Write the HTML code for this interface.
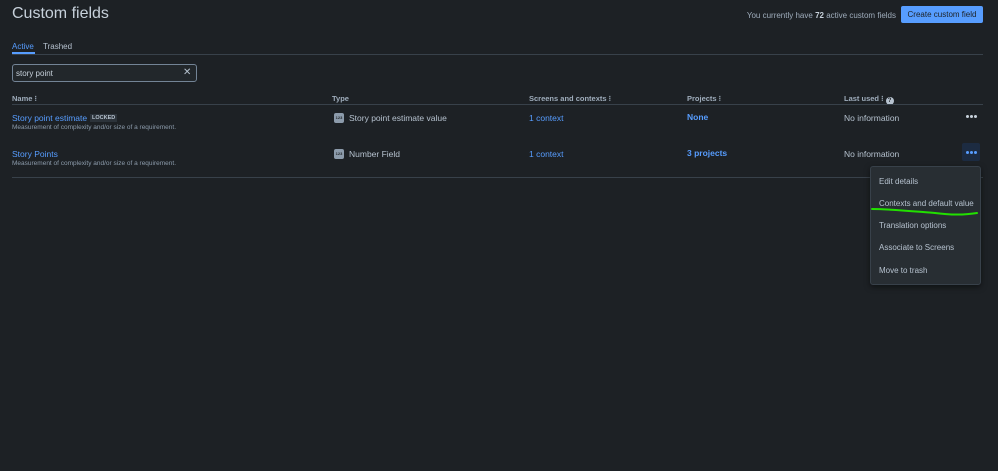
<!DOCTYPE html>
<html><head><meta charset="utf-8"><style>
*{margin:0;padding:0;box-sizing:border-box}
body{width:998px;height:471px;background:#1d2125;font-family:"Liberation Sans",sans-serif;color:#b6c2cf;position:relative;overflow:hidden}
.a{position:absolute;white-space:nowrap}
.link{color:#579dff}
.h{font-size:7.5px;font-weight:bold;color:#9fadbc}
.sub{font-size:6.5px;color:#8c9bab}
.ic{position:absolute;width:10px;height:10px;background:#8c9bab;border-radius:2px;font-size:4px;color:#22272b;font-weight:bold;text-align:center;line-height:10px}
.mi{position:absolute;left:8px;font-size:8px;color:#b6c2cf}
.d{position:absolute;width:3px;height:3px;border-radius:50%}
</style></head><body>
<div class="a" style="left:12px;top:5px;font-size:16px;color:#c7d1db">Custom fields</div>
<div class="a" style="right:102px;top:11px;font-size:8px;color:#9fadbc">You currently have <b style="color:#c7d1db">72</b> active custom fields</div>
<div class="a" style="left:901px;top:6px;width:82px;height:17px;background:#579dff;border-radius:2px;color:#1d2125;font-size:8px;line-height:17px;text-align:center">Create custom field</div>

<div class="a" style="left:12px;top:42px;font-size:8px;color:#579dff">Active</div>
<div class="a" style="left:12px;top:52px;width:23px;height:2px;background:#579dff"></div>
<div class="a" style="left:43px;top:42px;font-size:8px;color:#b6c2cf">Trashed</div>
<div class="a" style="left:12px;top:54px;width:971px;height:1px;background:#38414a"></div>

<div class="a" style="left:12px;top:64px;width:185px;height:18px;border:1px solid #738496;border-radius:3px;background:#22272b"></div>
<div class="a" style="left:16px;top:69px;font-size:8px;color:#c7d1db">story point</div>
<div class="a" style="left:183px;top:67px;font-size:10px;color:#b6c2cf">✕</div>

<div class="a h" style="left:12px;top:94px">Name ⁝</div>
<div class="a h" style="left:332px;top:94px">Type</div>
<div class="a h" style="left:529px;top:94px">Screens and contexts ⁝</div>
<div class="a h" style="left:687px;top:94px">Projects ⁝</div>
<div class="a h" style="left:844px;top:94px">Last used ⁝ <span style="display:inline-block;width:8px;height:8px;border-radius:50%;background:#b6c2cf;color:#1d2125;font-size:6px;text-align:center;line-height:8px;vertical-align:-1px">?</span></div>
<div class="a" style="left:12px;top:104px;width:971px;height:1px;background:#38414a"></div>

<div class="a link" style="left:12px;top:113px;font-size:8.5px">Story point estimate</div>
<div class="a" style="left:90px;top:114px;padding:0 2px;background:#2c333a;font-size:5.5px;font-weight:bold;color:#b6c2cf;line-height:8px">LOCKED</div>
<div class="a sub" style="left:12px;top:124px">Measurement of complexity and/or size of a requirement.</div>
<div class="ic" style="left:334px;top:113px">123</div>
<div class="a" style="left:349px;top:113px;font-size:8.5px">Story point estimate value</div>
<div class="a link" style="left:529px;top:113px;font-size:8.5px">1 context</div>
<div class="a link" style="left:687px;top:112px;font-size:8.5px;font-weight:bold">None</div>
<div class="a" style="left:844px;top:113px;font-size:8.5px">No information</div>
<div class="d" style="left:966px;top:115px;background:#c7d1db"></div>
<div class="d" style="left:970px;top:115px;background:#c7d1db"></div>
<div class="d" style="left:974px;top:115px;background:#c7d1db"></div>

<div class="a link" style="left:12px;top:149px;font-size:8.5px">Story Points</div>
<div class="a sub" style="left:12px;top:160px">Measurement of complexity and/or size of a requirement.</div>
<div class="ic" style="left:334px;top:149px">123</div>
<div class="a" style="left:349px;top:149px;font-size:8.5px">Number Field</div>
<div class="a link" style="left:529px;top:149px;font-size:8.5px">1 context</div>
<div class="a link" style="left:687px;top:148px;font-size:8.5px;font-weight:bold">3 projects</div>
<div class="a" style="left:844px;top:149px;font-size:8.5px">No information</div>
<div class="a" style="left:962px;top:143px;width:18px;height:18px;background:#1c2b41;border-radius:2px"></div>
<div class="d" style="left:966px;top:151px;background:#579dff"></div>
<div class="d" style="left:970px;top:151px;background:#579dff"></div>
<div class="d" style="left:974px;top:151px;background:#579dff"></div>
<div class="a" style="left:12px;top:177px;width:971px;height:1px;background:#38414a"></div>

<div class="a" style="left:870px;top:166px;width:111px;height:119px;background:#282e33;border:1px solid #38414a;border-radius:3px;box-shadow:0 2px 6px rgba(0,0,0,.5)">
<div class="mi" style="top:10px">Edit details</div>
<div class="mi" style="top:32px">Contexts and default value</div>
<div class="mi" style="top:54px">Translation options</div>
<div class="mi" style="top:76px">Associate to Screens</div>
<div class="mi" style="top:99px">Move to trash</div>
</div>
<svg class="a" style="left:0;top:0" width="998" height="471"><path d="M872 209 C890 209 910 211 935 213 C950 215 965 215 977 213" stroke="#22e000" stroke-width="2" fill="none" stroke-linecap="round"/></svg>
</body></html>
